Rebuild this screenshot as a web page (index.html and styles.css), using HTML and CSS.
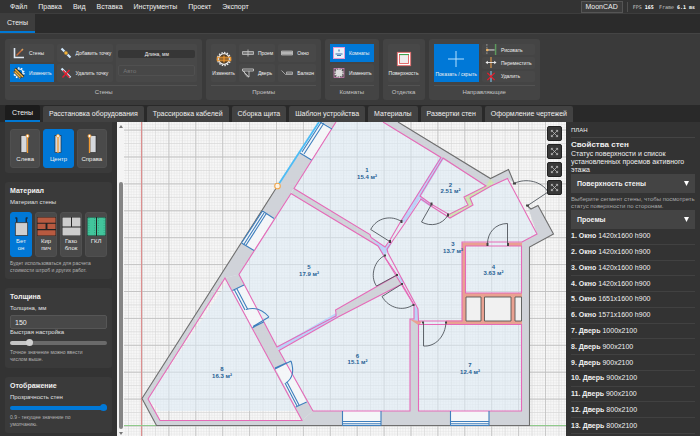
FILE: index.html
```html
<!DOCTYPE html>
<html lang="ru">
<head>
<meta charset="utf-8">
<title>MoonCAD</title>
<link rel="stylesheet" href="styles.css">
</head>
<body>
<div class="app">
  <header class="menubar">
    <nav class="menu">
      <a href="#">Файл</a><a href="#">Правка</a><a href="#">Вид</a><a href="#">Вставка</a><a href="#">Инструменты</a><a href="#">Проект</a><a href="#">Экспорт</a>
    </nav>
    <span class="brand">MoonCAD</span>
    <span class="stats"><span>FPS <b>165</b></span><span>Frame <b>6.1 ms</b></span></span>
  </header>

  <div class="ribbon-tabs"><button class="ribbon-tab">Стены</button></div>

  <section class="ribbon">
    <div class="group">
      <div class="tools">
        <div class="stack">
          <button class="tool"><svg viewBox="0 0 12 12"><path d="M1.500 1v9.500h9.500" fill="none" stroke="#dfe9f3" stroke-width="1.600"/><path d="M3.500 8.500l5.500-5.500" stroke="#c56a3a" stroke-width="1.400"/><path d="M8 3l1.500-1.500 1 1L9 4z" fill="#d8a060"/></svg>Стены</button>
          <button class="tool active"><svg viewBox="0 0 12 12"><circle cx="6" cy="6" r="4" fill="none" stroke="#fff" stroke-width="1.200"/><circle cx="6" cy="6" r="5" fill="none" stroke="#fff" stroke-width="1.300" stroke-dasharray="1.400 1.740"/><path d="M2 1.500l8.500 8.500M1 4l7 7" stroke="#222" stroke-width="2.600"/><path d="M2 2l8 8M1.500 4.500l6 6" stroke="#f0b440" stroke-width="1.600"/></svg>Изменить</button>
        </div>
        <div class="stack">
          <button class="tool"><svg viewBox="0 0 12 12"><path d="M1.500 1.500l9 9" stroke="#cfe6fa" stroke-width="2.200"/><circle cx="6" cy="6" r="2" fill="#f5b335" stroke="#444" stroke-width=".6"/></svg>Добавить точку</button>
          <button class="tool"><svg viewBox="0 0 12 12"><path d="M1.500 1.500l9 9" stroke="#cfe6fa" stroke-width="2.200"/><path d="M2.500 10.500l7-7.500M3 3.500l6.500 7" stroke="#e51c2c" stroke-width="1.400"/></svg>Удалить точку</button>
        </div>
        <div class="length">
          <label for="len">Длина, мм</label>
          <input id="len" type="text" placeholder="Авто">
        </div>
      </div>
      <div class="caption">Стены</div>
    </div>

    <div class="group">
      <div class="tools">
        <button class="tool big edit"><svg viewBox="0 0 18 18"><circle cx="9" cy="9" r="6" fill="#4a3a28" stroke="#eee" stroke-width="1.300"/><circle cx="9" cy="9" r="7.300" fill="none" stroke="#eee" stroke-width="1.500" stroke-dasharray="1.500 1.557"/><path d="M1.500 7h15v4h-15zM9 5v8M4 9h10" fill="none" stroke="#f29a30" stroke-width="1.300"/></svg>Изменить</button>
        <div class="stack">
          <button class="tool"><svg viewBox="0 0 12 12"><path d="M.5 4.500h11v3h-11zM6 2.500v7M.5 6h11" fill="none" stroke="#c8c8c8" stroke-width=".8"/></svg>Проем</button>
          <button class="tool"><svg viewBox="0 0 12 12"><path d="M.5 2h11v2h-11zM1 4l6 6V4M2 4c1 4 3 6 5 6" fill="none" stroke="#c8c8c8" stroke-width=".9"/></svg>Дверь</button>
        </div>
        <div class="stack">
          <button class="tool"><svg viewBox="0 0 12 12"><path d="M.5 4h11v4h-11zM.5 5.500h11M.5 6.500h11" fill="#888" stroke="#c8c8c8" stroke-width=".7"/></svg>Окно</button>
          <button class="tool"><svg viewBox="0 0 12 12"><path d="M.5 3.500l4 4h1M5.500 5h6v2.500h-6zM5.500 6.200h6" fill="none" stroke="#b8b8b8" stroke-width=".8"/></svg>Балкон</button>
        </div>
      </div>
      <div class="caption">Проемы</div>
    </div>

    <div class="group">
      <div class="tools">
        <div class="stack">
          <button class="tool active"><svg viewBox="0 0 12 12"><rect x=".5" y=".5" width="11" height="11" fill="#e9f3fa" stroke="#e89ad0"/><path d="M6 2.500v2M2.500 7h7M4 8.500h4" stroke="#3a72ad" stroke-width="1.100"/></svg>Комнаты</button>
          <button class="tool"><svg viewBox="0 0 12 12"><rect x="1" y="1.500" width="10" height="9" fill="#555" stroke="#d982bd" stroke-width=".7"/><circle cx="6" cy="6" r="3.400" fill="#ddd"/><circle cx="6" cy="6" r="4" fill="none" stroke="#eee" stroke-width="1.200" stroke-dasharray="1.300 1.213"/></svg>Изменить</button>
        </div>
      </div>
      <div class="caption">Комнаты</div>
    </div>

    <div class="group">
      <div class="tools">
        <button class="tool big surface"><svg viewBox="0 0 18 18"><rect x="1.500" y="1.500" width="15" height="15" fill="#fff" stroke="#e56a6a"/><rect x="4" y="4" width="10" height="10" fill="#eee" stroke="#e06060"/><path d="M3.500 4h11" stroke="#3fa34d" stroke-width="1.200"/></svg>Поверхность</button>
      </div>
      <div class="caption">Отделка</div>
    </div>

    <div class="group">
      <div class="tools">
        <button class="tool big active guides"><svg viewBox="0 0 18 18"><path d="M9 1v16M1 9h16" stroke="#b5e0ff" stroke-width="1"/></svg>Показать / скрыть</button>
        <div class="stack rows">
          <button class="tool"><svg viewBox="0 0 12 12"><path d="M1.500 0v12" stroke="#999" stroke-dasharray="2 1"/><path d="M1 6.500h9" stroke="#eee"/><circle cx="2" cy="6.500" r="1.300" fill="#f5b35a"/><path d="M11 0v12" stroke="#5c9a5e" stroke-width="1.600"/></svg>Рисовать</button>
          <button class="tool"><svg viewBox="0 0 12 12"><path d="M6 0v12" stroke="#e59a4a" stroke-width="1.200"/><path d="M1 6h10" stroke="#eee"/><path d="M0 6l2.500-1.800v3.600zM12 6l-2.500-1.800v3.600z" fill="#eee"/></svg>Переместить</button>
          <button class="tool"><svg viewBox="0 0 12 12"><path d="M6 0v12" stroke="#7fc4e8" stroke-width="1.200"/><path d="M2 2l8 8M10 2l-8 8" stroke="#e51c2c" stroke-width="1.400"/></svg>Удалить</button>
        </div>
      </div>
      <div class="caption">Направляющие</div>
    </div>
  </section>

  <nav class="doc-tabs">
    <button class="doc-tab current">Стены</button><button class="doc-tab">Расстановка оборудования</button><button class="doc-tab">Трассировка кабелей</button><button class="doc-tab">Сборка щита</button><button class="doc-tab">Шаблон устройства</button><button class="doc-tab">Материалы</button><button class="doc-tab">Развертки стен</button><button class="doc-tab">Оформление чертежей</button>
  </nav>

  <main class="work">
    <aside class="params">
      <section class="card">
        <p class="label">Положение стены</p>
        <div class="choices three">
          <button class="choice"><svg viewBox="0 0 10 20"><rect x="1" y="1.500" width="6" height="17" fill="#d5d8dd" stroke="#222" stroke-width=".6"/><path d="M7.500 1v18" stroke="#f29a30" stroke-width="1.300"/><circle cx="7.500" cy="2" r="1.500" fill="#fff" stroke="#f29a30" stroke-width=".8"/></svg>Слева</button>
          <button class="choice active"><svg viewBox="0 0 10 20"><rect x="2" y="1.500" width="6" height="17" fill="#d5d8dd" stroke="#222" stroke-width=".6"/><path d="M5 1v18" stroke="#f29a30" stroke-width="1.300"/><circle cx="5" cy="2" r="1.500" fill="#fff" stroke="#f29a30" stroke-width=".8"/></svg>Центр</button>
          <button class="choice"><svg viewBox="0 0 10 20"><rect x="3" y="1.500" width="6" height="17" fill="#d5d8dd" stroke="#222" stroke-width=".6"/><path d="M2.500 1v18" stroke="#f29a30" stroke-width="1.300"/><circle cx="2.500" cy="2" r="1.500" fill="#fff" stroke="#f29a30" stroke-width=".8"/></svg>Справа</button>
        </div>
      </section>

      <section class="card">
        <h2>Материал</h2>
        <p class="label">Материал стены</p>
        <div class="choices four">
          <button class="choice active"><svg viewBox="0 0 20 20"><path d="M5 6V1M15 6V1M3.500 1h2M14.500 1h2" stroke="#1b2a3a" stroke-width="1.500"/><rect x="3.500" y="6" width="13" height="13.500" fill="#cfcfcf" stroke="#333" stroke-width=".8"/></svg>Бет<br>он</button>
          <button class="choice"><svg viewBox="0 0 20 20"><path d="M0 0h20v20H0z" fill="#222"/><path d="M.5.5h19v5.500H.5zM.5 7h8.500v5.500H.5zM11 7h8.500v5.500H11zM.5 14h19v5.500H.5z" fill="#b85a40"/></svg>Кир<br>пич</button>
          <button class="choice"><svg viewBox="0 0 20 20"><path d="M0 0h20v20H0z" fill="#222"/><path d="M.5.500h9v9.500h-9zM10.500.500h9v9.500h-9zM.5 11h19v8.500H.5z" fill="#cdcdcd"/></svg>Газо<br>блок</button>
          <button class="choice"><svg viewBox="0 0 20 20"><path d="M0 0h20v20H0z" fill="#222"/><path d="M.5.500h9v19h-9zM10.500.500h9v19h-9z" fill="#42c59c"/><path d="M2 1v18M8 1v18M12 1v18M18 1v18" stroke="#238063" stroke-width=".6" stroke-dasharray="1 1.500"/></svg>ГКЛ</button>
        </div>
        <p class="hint">Будет использоваться для расчета стоимости штроб и других работ.</p>
      </section>

      <section class="card">
        <h2>Толщина</h2>
        <label class="label" for="thick">Толщина, мм</label>
        <div class="quick">
          <input class="field" id="thick" type="text" value="150">
          <label class="label" for="quick">Быстрая настройка</label>
        </div>
        <input class="range grey" id="quick" type="range" min="0" max="100" value="18">
        <p class="hint">Точное значение можно ввести числом выше.</p>
      </section>

      <section class="card">
        <h2>Отображение</h2>
        <label class="label" for="alpha">Прозрачность стен</label>
        <input class="range blue" id="alpha" type="range" min="0" max="100" value="100">
        <p class="hint">0.9 - текущее значение по умолчанию.</p>
      </section>
    </aside>
    <div class="scrollbar"><i class="up"></i><i class="thumb"></i><i class="down"></i></div>

    <section class="canvas">
      <svg class="plan" viewBox="124 122 442 314" preserveAspectRatio="xMinYMin slice">
        <defs>
          <pattern id="fine" x="141.500" y="425.500" width="2.690" height="2.690" patternUnits="userSpaceOnUse"><path d="M0 0h2.690M0 0v2.690" stroke="#e0e0e0" stroke-width=".8"/></pattern>
          <pattern id="mid" x="141.500" y="425.500" width="13.450" height="13.450" patternUnits="userSpaceOnUse"><path d="M0 0h13.450M0 0v13.450" stroke="#d4d4d4" stroke-width="1"/></pattern>
          <pattern id="major" x="141.500" y="425.500" width="26.900" height="26.900" patternUnits="userSpaceOnUse"><path d="M0 0h26.900M0 0v26.900" stroke="#bcbcbc" stroke-width="1.300"/></pattern>
        </defs>
        <rect x="124" y="122" width="1200" height="900" fill="#f7f7f7"/>
        <rect x="124" y="122" width="1200" height="900" fill="url(#fine)"/>
        <rect x="124" y="122" width="1200" height="900" fill="url(#mid)"/>
        <rect x="124" y="122" width="1200" height="900" fill="url(#major)"/>
        <path d="M141.500 122v900" stroke="#dc8f8f" stroke-width="1.200"/>
        <path d="M124 425.500h1200" stroke="#8fca8b" stroke-width="1.200"/>

        <!-- floor tint -->
        <path d="M148 399L336 122h47l103 64 21.500-7.500L537 234l-15 8v169H160z" fill="#dcebf5" fill-opacity=".55"/>
        <!-- load-bearing walls -->
        <g fill="#d0d3d9">
          <path d="M142 398.500L319 122h17L239 274.500 225 278 148 399l12 21.500h142L313 411h208.500V242L537 234l-9.500-28 3.500 3 7-3.500 15.500 28.500-24 13v178.500H156.500z"/>
          <path d="M383 122h15l92.500 56.500 18-9 6.500 14-7.500-5L491 186l-5 0z"/>
          <path d="M225 278l14-3.500L277 347l36 64-11 9.500z"/>
          <path d="M291 193.500l3-5 76 46 1 3 7 8.500z"/>
          <path d="M335.500 310l61.500-35 5 9-64 33z"/>
          <path d="M410 319h8.500v92H410z"/>
        </g>
        <!-- light partitions -->
        <g fill="#bcd3f7">
          <path d="M440 157.500l4 1-39 64.500-4-2z"/>
          <path d="M420 196l11 8v3l-11-7z"/>
          <path d="M370 237l15 10 5-5 2 1-8 14-6-11z"/>
          <path d="M277 347l59-34 2 4-59 33z"/>
          <path d="M397 275l5 3 2 5-2 1zM414 305l4 4v12h-4z"/>
        </g>
        <path d="M486 186l5 0-20.500 12 2.500 7-23 13-1.500-4 19.500-9-4-8z" fill="#cfe3b4"/>
        <path d="M486 186l4-7 4 4-3 3z" fill="#cfe3b4"/>
        <path d="M462 242.500h25v3.500h-21v47h56v4h-7v23.500h7v4h-76v-4h16zM508 242.500h14v3.500h-14zM410 319.500l12 2-3 4z" fill="#e9a191"/>
        <!-- shafts -->
        <g fill="#f1f1f1" stroke="#555" stroke-width=".9"><path d="M466 297h15v24h-15zM484.500 297H511v24h-26.500zM515 297h6.500v24H515z"/></g>
        <!-- outer contour -->
        <path d="M277.500 186L142 398.500l14.500 27h373V247l24-13L538 205.500l-7 3.500-3.500-3M514.500 184l-6-14.500-18 9L398 122" fill="none" stroke="#6e6e6e" stroke-width="1.100"/>
        <!-- window and door openings -->
        <g fill="#f4f6f8"><path d="M300 153l11.500 7L332 128l-12-7zM262.500 211l11.500 7.500-20 32-12.500-7.500zM342.500 411H381v14.500h-38.500zM450.500 411H489v14.500h-38.500zM232.500 290.500l11.500-5.500 20 36.700-11.500 6zM275 368l11.700-5.300 20 39.300-11 5z"/></g>
        <!-- room contours -->
        <g fill="none" stroke="#e56ab8" stroke-width="1.100">
          <path d="M336 122l-42 66.500 76 46 1 3 14 9.500 5-7 11-19 40-63.500L383 122"/>
          <path d="M291 193.500l-52 81 38 72.500 59-31v-3l-.5-3L397 275l-13-19-6-10z"/>
          <path d="M279 350.500l59-33.500 64-33 12 21v14h-4v92h-97z"/>
          <path d="M225 278l-77 121 12 21.500h142z"/>
          <path d="M418.500 324.500h103V411h-103zM465.500 246h56v47h-56z"/>
          <path d="M443 158l43 28-22 11 4 8-19 9.500-18-10.500-11-8z"/>
          <path d="M507.500 178.500L537 234l-15 8h-60v79h-43.500l-.5-12-30-56 -1-4 18-26 16-24 10 7 19 12 23-13-3-7 21-12z"/>
          <path d="M384 256l30 49"/>
        </g>
        <!-- windows -->
        <g fill="none" stroke="#3f7fbd" stroke-width="1.100">
          <path d="M300 153l11.500 7M320 122l12 7M302 152l20-31M304 154l20-31"/>
          <path d="M262.500 211l11.500 7.500M241.500 243l12.500 7.500M262.500 211l-21 32M264 213l-20.500 32M266 214l-20.500 32"/>
          <path d="M342.500 411v14.500M381 411v14.500M342.500 421.500H381M342.500 423.700H381M342.500 425.500H381M450.500 411v14.500M489 411v14.500M450.500 421.500H489M450.500 423.700H489M450.500 425.500H489"/>
          <path d="M232.500 290.500l11.500-5.500M252.500 327.700l11.500-6M234.500 290l10.500 20M237 289l10.500 20M253 326.500l16-9.500M246 309.500q13-4 23 7.500"/>
          <path d="M275 368l11.700-5.300M295.700 407l11-5M285 383l12 23M287 382l12 23M275 369l16-8M286 383q10-7 5-22"/>
        </g>
        <path d="M277.500 186L319 122" stroke="#4dbcf5" stroke-width="1.800"/>
        <circle cx="277.500" cy="186" r="2.800" fill="#fbf3e6" stroke="#f0a850" stroke-width="1.100"/>
        <!-- doors -->
        <g fill="none" stroke="#4f555b" stroke-width=".9">
          <path d="M390 241.700L370.700 229.500C377 217 392 215 401.700 221.700"/>
          <path d="M431.700 204l-10.200 18c9 5 21 3 26.500-7"/>
          <path d="M514 183.500c12-6 28-2 34 8.500l-21 14"/>
          <path d="M507.500 244v-20.500c-12 0-20 9-20 20.500"/>
          <path d="M397 275l-20.500 11c-7-10-2-26 8.500-30.500"/>
          <path d="M402 284l-20 12.500c7 12 21 15 31 8.500"/>
          <path d="M423.500 322v24c12 1 22-10 22.500-24"/>
        </g>
        <path d="M389 240h2v3h-2zM400.500 220h2v3h-2zM430.500 202.500h2v3h-2zM447 213.500h2v3h-2zM513 182.500h3v2h-3zM526 204.500h3v2h-3zM486.500 243h2v3h-2zM507 243h2v3h-2zM384 254.500h2v2h-2zM396 274h2v2h-2zM401 283h2v2h-2zM412.500 304h2v2h-2zM422 321.500h2v2h-2zM445 321.500h2v2h-2z" fill="#444"/>
        <!-- room numbers and areas -->
        <g class="room-labels">
          <text x="367" y="172">1</text><text x="367" y="179">15.4 м²</text>
          <text x="450.500" y="186.500">2</text><text x="450.500" y="193">2.51 м²</text>
          <text x="453" y="246">3</text><text x="453" y="253">13.7 м²</text>
          <text x="493.500" y="268.500">4</text><text x="493.500" y="275">3.63 м²</text>
          <text x="309" y="269">5</text><text x="309" y="276">17.9 м²</text>
          <text x="357.500" y="357.500">6</text><text x="357.500" y="364">15.1 м²</text>
          <text x="470" y="367">7</text><text x="470" y="373.500">12.4 м²</text>
          <text x="222" y="371">8</text><text x="222" y="378">16.3 м²</text>
        </g>
      </svg>
      <div class="canvas-tools">
        <button aria-label="Развернуть"><svg viewBox="0 0 10 10"><path d="M1.500 1.500l7 7M8.500 1.500l-7 7M1.500 3.500v-2h2M6.500 1.500h2v2M8.500 6.500v2h-2M3.500 8.500h-2v-2"/></svg></button>
        <button aria-label="Вписать"><svg viewBox="0 0 10 10"><path d="M1.500 1.500l7 7M8.500 1.500l-7 7M1.500 3.500v-2h2M6.500 1.500h2v2M8.500 6.500v2h-2M3.500 8.500h-2v-2"/></svg></button>
        <button aria-label="Увеличить"><svg viewBox="0 0 10 10"><path d="M1.500 1.500l7 7M8.500 1.500l-7 7M1.500 3.500v-2h2M6.500 1.500h2v2M8.500 6.500v2h-2M3.500 8.500h-2v-2"/></svg></button>
        <button aria-label="Уменьшить"><svg viewBox="0 0 10 10"><path d="M1.500 1.500l7 7M8.500 1.500l-7 7M1.500 3.500v-2h2M6.500 1.500h2v2M8.500 6.500v2h-2M3.500 8.500h-2v-2"/></svg></button>
      </div>
    </section>

    <aside class="props">
      <div class="props-head">ПЛАН</div>
      <h1>Свойства стен</h1>
      <p class="lead">Статус поверхности и список установленных проемов активного этажа</p>
      <button class="fold">Поверхность стены<svg viewBox="0 0 6 6"><path d="M0 0h6L3 6z"/></svg></button>
      <p class="note">Выберите сегмент стены, чтобы посмотреть статус поверхности по сторонам.</p>
      <button class="fold">Проемы<svg viewBox="0 0 6 6"><path d="M0 0h6L3 6z"/></svg></button>
      <ul class="openings">
        <li><b>1. Окно</b> 1420x1600 h900</li>
        <li><b>2. Окно</b> 1420x1600 h900</li>
        <li><b>3. Окно</b> 1420x1600 h900</li>
        <li><b>4. Окно</b> 1420x1600 h900</li>
        <li><b>5. Окно</b> 1651x1600 h900</li>
        <li><b>6. Окно</b> 1571x1600 h900</li>
        <li><b>7. Дверь</b> 1000x2100</li>
        <li><b>8. Дверь</b> 900x2100</li>
        <li><b>9. Дверь</b> 900x2100</li>
        <li><b>10. Дверь</b> 900x2100</li>
        <li><b>11. Дверь</b> 900x2100</li>
        <li><b>12. Дверь</b> 800x2100</li>
        <li><b>13. Дверь</b> 800x2100</li>
      </ul>
    </aside>
  </main>
</div>
</body>
</html>
```
FILE: styles.css
```css
* { box-sizing: border-box; margin: 0; padding: 0; }
body { background: #333; color: #f0f0f0; font: 7px/8px "Liberation Sans", Arial, sans-serif; }
button, input { font: inherit; color: inherit; border: 0; background: none; }
a { color: inherit; text-decoration: none; }
svg { display: block; }

.app { display: flex; flex-direction: column; height: 100vh; }

.menubar { display: flex; align-items: center; height: 14px; padding: 0 5px; background: #333; border-bottom: 1px solid #3d3d3d; }
.menu { display: flex; flex: 1; gap: 11px; padding-left: 5px; }
.brand { padding: 1px 4px; background: #3c3c3c; border: 1px solid #555; }
.stats { display: flex; gap: 5px; margin-left: 4px; padding-left: 5px; border-left: 1px solid #505050; font: 5px/10px "DejaVu Sans Mono", monospace; color: #c8c8c8; }
.stats b { color: #fff; }

.ribbon-tabs { display: flex; height: 19px; background: #2b2b2b; }
.ribbon-tab { padding: 0 7px; background: #3d3d3d; border-bottom: 2px solid #0078d4; }

.ribbon { display: flex; gap: 4px; height: 72px; padding: 5px; background: #3a3a3a; border-top: 1px solid #444; }
.group { display: flex; flex-direction: column; gap: 3px; padding: 5px 5px 4px; background: #444; border-radius: 3px; }
.tools { display: flex; gap: 3px; height: 39px; }
.stack { display: flex; flex-direction: column; gap: 2px; }
.tool { display: flex; flex: 1; align-items: center; gap: 4px; padding: 0 2px 0 3px; background: #484848; border-radius: 2px; font-size: 5px; line-height: 6px; white-space: nowrap; }
.tool svg { width: 12px; height: 12px; }
.tool.active { background: #0078d7; border-radius: 0; }
.tool.big { flex-direction: column; justify-content: center; gap: 3px; padding: 0 1px; }
.tool.guides { padding: 0 2px; }
.tool.big svg { width: 16px; height: 16px; }
.tool.guides svg { width: 18px; height: 18px; }
.rows .tool svg { height: 11px; }
.rows { min-width: 53px; }
.length { display: flex; flex-direction: column; justify-content: space-between; width: 81px; padding: 6px 2px; background: #484848; border-radius: 2px; }
.length label { background: #363636; border-radius: 2px; text-align: center; font-size: 5px; line-height: 8px; }
.length input { width: 100%; height: 11px; padding: 0 4px; background: #474747; border: 1px solid #505050; border-radius: 2px; font-size: 6px; }
.length input::placeholder { color: #777; }
.caption { padding-top: 2px; border-top: 1px solid #525252; text-align: center; font-size: 6px; color: #c4c4c4; }

.doc-tabs { display: flex; align-items: flex-end; gap: 3px; height: 17px; padding: 0 5px; background: #292929; }
.doc-tab { height: 16px; padding: 0 6px; background: #424242; border-radius: 2px 2px 0 0; white-space: nowrap; }
.doc-tab.current { height: 17px; padding: 0 7px; background: #1c1c1c; border-bottom: 2px solid #0078d4; }

.work { display: flex; flex: 1; min-height: 0; }
.params { display: flex; flex-direction: column; justify-content: flex-end; gap: 9px; width: 117px; padding: 0 5px 3px; overflow: hidden; background: #333; }
.card { display: flex; flex: none; flex-direction: column; gap: 3px; padding: 5px; background: #3a3a3a; border-radius: 3px; }
.card h2 { margin-bottom: 1px; font-size: 7px; line-height: 8px; }
.label { display: block; color: #e0e0e0; font-size: 6px; line-height: 7px; }
.hint { padding-right: 8px; color: #b4b4b4; font-size: 5px; line-height: 7px; }
.choices { display: grid; gap: 3px; margin-top: 3px; }
.three { grid-template-columns: repeat(3, minmax(0, 1fr)); }
.four { grid-template-columns: repeat(4, minmax(0, 1fr)); }
.choice { display: flex; flex-direction: column; align-items: center; gap: 2px; padding: 4px 0; background: #4a4a4a; border: 1px solid #505050; border-radius: 3px; font-size: 6px; line-height: 7px; }
.choice.active { background: #0078d7; border-color: #0078d7; }
.choice svg { width: 19px; height: 19px; }
.three .choice svg { width: 10px; height: 20px; }
.field { display: block; width: 100%; height: 14px; padding: 0 4px; background: #484848; border: 1px solid #565656; border-radius: 2px; }
.range { appearance: none; width: 100%; height: 7px; background: transparent; }
.range::-webkit-slider-runnable-track { height: 4px; border-radius: 2px; }
.range::-webkit-slider-thumb { appearance: none; width: 7px; height: 7px; margin-top: -2px; border-radius: 50%; }
.grey::-webkit-slider-runnable-track { background: linear-gradient(90deg, #c4c4c4 20%, #6a6a6a 20%); }
.grey::-webkit-slider-thumb { background: #d0d0d0; }
.blue::-webkit-slider-runnable-track { background: #0078d7; }
.blue::-webkit-slider-thumb { background: #0078d7; }

.scrollbar { display: flex; flex-direction: column; align-items: center; width: 7px; padding: 3px 0 1px; background: #f4f4f4; }
.scrollbar .up { border: 2px solid transparent; border-top: 0; border-bottom: 3px solid #777; }
.scrollbar .thumb { flex: 1; width: 4px; margin: 54px 0 3px; border-radius: 2px; background: #858585; }
.scrollbar .down { border: 2px solid transparent; border-bottom: 0; border-top: 3px solid #777; }

.canvas { position: relative; flex: 1; min-width: 0; overflow: hidden; background: #f7f7f7; }
.plan { width: 100%; height: 100%; }
.room-labels text { font: bold 6px "Liberation Sans", Arial, sans-serif; fill: #1f5f94; text-anchor: middle; }
.canvas-tools { position: absolute; top: 4px; right: 4px; display: flex; flex-direction: column; gap: 3px; }
.canvas-tools button { width: 15px; height: 15px; padding: 2px; background: #383838; border: 1px solid #222; border-radius: 2px; }
.canvas-tools path { fill: none; stroke: #c8c8c8; stroke-width: .8; }

.props { display: flex; flex-direction: column; width: 134px; padding: 4px 5px 2px; background: #333; }
.props-head { height: 12px; border-bottom: 1px solid #444; font-size: 6px; }
.props h1 { margin-top: 2px; font-size: 8px; line-height: 10px; }
.fold { display: flex; flex: none; align-items: center; justify-content: space-between; height: 19px; padding: 0 6px; background: #444; font-weight: bold; }
.fold svg { width: 5px; height: 5px; fill: #fff; }
.note { padding: 3px 0 0; color: #a8a8a8; font-size: 6px; line-height: 7px; }
.openings { display: grid; flex: 1; grid-auto-rows: 1fr; list-style: none; }
.openings li { display: flex; align-items: center; gap: 2px; border-bottom: 1px solid #414141; }
```
